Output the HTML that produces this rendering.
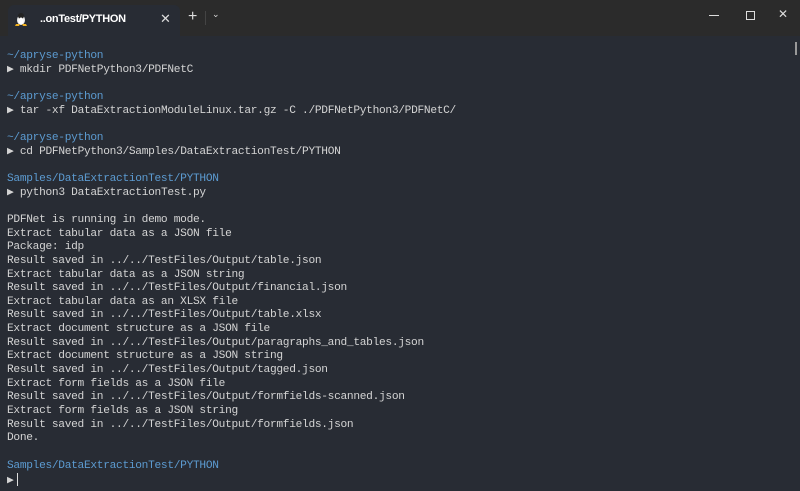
<!DOCTYPE html>
<html><head><style>
html,body{margin:0;padding:0;width:800px;height:491px;overflow:hidden;background:#282c34}
.tb{position:absolute;left:0;top:0;width:800px;height:36px;background:#2b2b2b}
.tab{position:absolute;left:8px;top:5px;width:172px;height:31px;background:#282c34;border-radius:6px 6px 0 0}
.tt{position:absolute;left:32px;top:8px;color:#fff;font:600 11px "Liberation Sans",sans-serif;letter-spacing:-0.3px}
.x{position:absolute;color:#ddd;font:13px "Liberation Sans",sans-serif}
pre{position:absolute;left:7px;top:50px;margin:0;font:11.2px/13.65px "Liberation Mono",monospace;letter-spacing:-0.3px;color:#d4d4d4}
.b{color:#5c9bd1}
.cur{display:inline-block;width:1px;height:13px;background:#ddd;vertical-align:-3px;margin-left:4px}
.sb{position:absolute;right:3px;top:42px;width:2px;height:13px;background:#999}
</style></head><body>
<div class="tb">
<div class="tab">
<svg style="position:absolute;left:7px;top:7px" width="12" height="14" viewBox="0 0 12 14"><ellipse cx="6" cy="8" rx="4" ry="5" fill="#eee"/><circle cx="6" cy="4" r="3" fill="#222"/><ellipse cx="6" cy="9" rx="2.5" ry="3.5" fill="#fff"/><path d="M1 12h4l-1 2H0zM7 12h4l1 2H8z" fill="#f0b020"/></svg>
<div class="tt">..onTest/PYTHON</div>
<div class="x" style="left:152px;top:6px">✕</div>
</div>
<div class="x" style="left:188px;top:8px;font-size:16px">+</div>
<div style="position:absolute;left:205px;top:11px;width:1px;height:14px;background:#444"></div>
<div class="x" style="left:212px;top:9px;font-size:9px">⌄</div>
<div style="position:absolute;left:709px;top:15px;width:10px;height:1px;background:#ddd"></div>
<div style="position:absolute;left:746px;top:11px;width:7px;height:7px;border:1px solid #ddd"></div>
<div class="x" style="left:778px;top:7px;font-size:12px">✕</div>
</div>
<div class="sb"></div>
<pre><span class="b">~/apryse-python</span>
▶ mkdir PDFNetPython3/PDFNetC

<span class="b">~/apryse-python</span>
▶ tar -xf DataExtractionModuleLinux.tar.gz -C ./PDFNetPython3/PDFNetC/

<span class="b">~/apryse-python</span>
▶ cd PDFNetPython3/Samples/DataExtractionTest/PYTHON

<span class="b">Samples/DataExtractionTest/PYTHON</span>
▶ python3 DataExtractionTest.py

PDFNet is running in demo mode.
Extract tabular data as a JSON file
Package: idp
Result saved in ../../TestFiles/Output/table.json
Extract tabular data as a JSON string
Result saved in ../../TestFiles/Output/financial.json
Extract tabular data as an XLSX file
Result saved in ../../TestFiles/Output/table.xlsx
Extract document structure as a JSON file
Result saved in ../../TestFiles/Output/paragraphs_and_tables.json
Extract document structure as a JSON string
Result saved in ../../TestFiles/Output/tagged.json
Extract form fields as a JSON file
Result saved in ../../TestFiles/Output/formfields-scanned.json
Extract form fields as a JSON string
Result saved in ../../TestFiles/Output/formfields.json
Done.

<span class="b">Samples/DataExtractionTest/PYTHON</span>
▶<span class="cur"></span></pre>
</body></html>
